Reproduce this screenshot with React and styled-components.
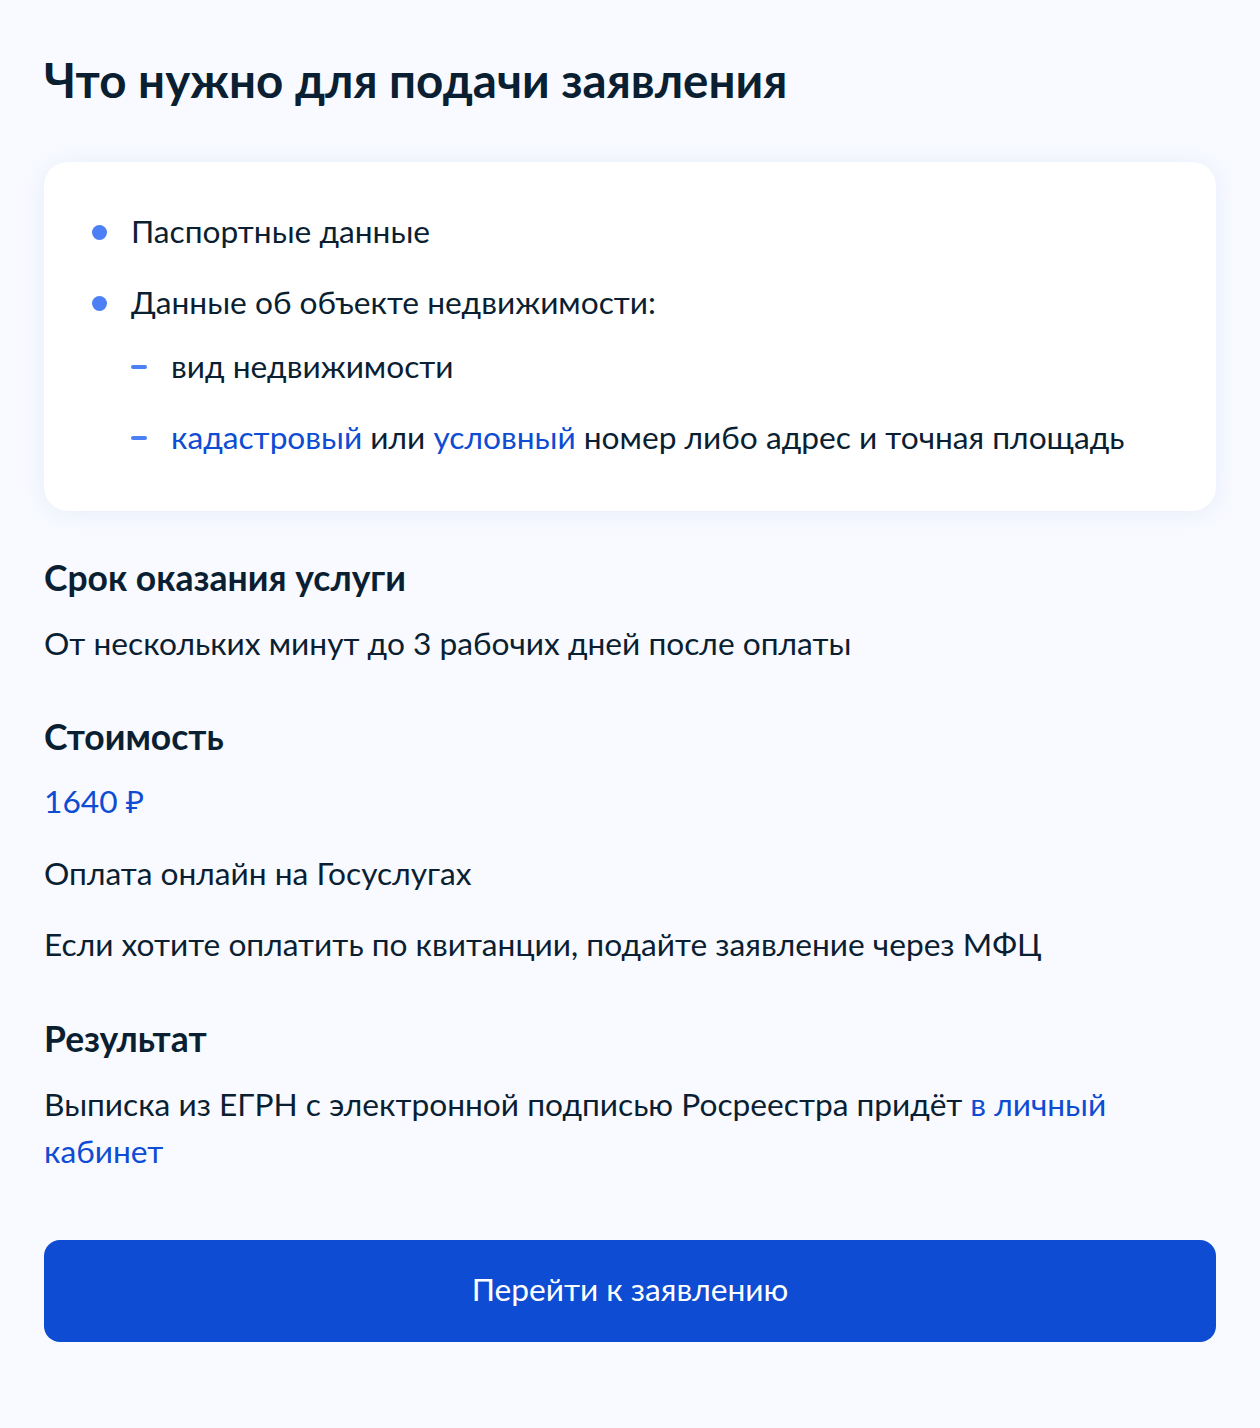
import React from "react";
import styled, { createGlobalStyle } from "styled-components";

const GlobalStyle = createGlobalStyle`
  html, body {
    margin: 0;
    padding: 0;
    background: #f8faff;
  }
  body {
    font-family: Lato, "Noto Sans", sans-serif;
    color: #0b1f33;
  }
`;

const Page = styled.main`
  padding: 52px 44px 86px;
  min-height: 1428px;
  box-sizing: border-box;
`;

const Title = styled.h1`
  margin: 0;
  font-size: 47.5px;
  line-height: 56px;
  font-weight: 700;
  letter-spacing: 0;
`;

const Card = styled.section`
  margin-top: 54px;
  background: #ffffff;
  border-radius: 24px;
  padding: 46px 48px 51px;
  box-shadow: 0 2px 24px rgba(140, 165, 220, 0.16);
`;

const List = styled.ul`
  list-style: none;
  margin: 0;
  padding: 0;
  display: flex;
  flex-direction: column;
  gap: 25px;
`;

const SubList = styled(List)`
  margin-top: 18px;
`;

const Item = styled.li`
  display: flex;
  flex-direction: column;
`;

const Row = styled.div`
  display: flex;
  align-items: center;
  font-size: 31.7px;
  line-height: 46px;
`;

const Dot = styled.span`
  flex: none;
  width: 15px;
  height: 15px;
  border-radius: 50%;
  background: #4c80f5;
  margin: 2px 24px 0 0;
`;

const Dash = styled.span`
  flex: none;
  width: 16px;
  height: 4px;
  border-radius: 2px;
  background: #4c80f5;
  margin: 2px 24px 0 0;
`;

const Indent = styled.div`
  padding-left: 39px;
`;

const Link = styled.a`
  color: #0d4cd3;
  text-decoration: none;
`;

const Section = styled.section`
  margin-top: ${(p) => p.$top}px;
`;

const Heading = styled.h3`
  margin: 0;
  font-size: 35.5px;
  line-height: 40px;
  font-weight: 700;
`;

const Text = styled.p`
  margin: ${(p) => p.$top}px 0 0;
  font-size: 31.7px;
  line-height: 47px;
  color: ${(p) => (p.$link ? "#0d4cd3" : "#0b1f33")};
`;

const Button = styled.button`
  display: block;
  width: 100%;
  margin-top: 65px;
  height: 102px;
  padding: 0 0 4px;
  border: none;
  border-radius: 16px;
  background: #0d4cd3;
  color: #ffffff;
  font-family: Lato, "Noto Sans", sans-serif;
  font-size: 31.7px;
  cursor: pointer;
`;

export default function App() {
  return (
    <>
      <GlobalStyle />
      <Page>
        <Title>Что нужно для подачи заявления</Title>
        <Card>
          <List>
            <Item>
              <Row>
                <Dot />
                Паспортные данные
              </Row>
            </Item>
            <Item>
              <Row>
                <Dot />
                Данные об объекте недвижимости:
              </Row>
              <Indent>
                <SubList>
                  <Item>
                    <Row>
                      <Dash />
                      вид недвижимости
                    </Row>
                  </Item>
                  <Item>
                    <Row>
                      <Dash />
                      <span>
                        <Link href="#">кадастровый</Link> или{" "}
                        <Link href="#">условный</Link> номер либо адрес и
                        точная площадь
                      </span>
                    </Row>
                  </Item>
                </SubList>
              </Indent>
            </Item>
          </List>
        </Card>

        <Section $top={47}>
          <Heading>Срок оказания услуги</Heading>
          <Text $top={22}>От нескольких минут до 3 рабочих дней после оплаты</Text>
        </Section>

        <Section $top={50}>
          <Heading>Стоимость</Heading>
          <Text $top={21} $link>1640 ₽</Text>
          <Text $top={25}>Оплата онлайн на Госуслугах</Text>
          <Text $top={24}>
            Если хотите оплатить по квитанции, подайте заявление через МФЦ
          </Text>
        </Section>

        <Section $top={51}>
          <Heading>Результат</Heading>
          <Text $top={22}>
            Выписка из ЕГРН с электронной подписью Росреестра придёт{" "}
            <Link href="#">в личный</Link>
            <br />
            <Link href="#">кабинет</Link>
          </Text>
        </Section>

        <Button>Перейти к заявлению</Button>
      </Page>
    </>
  );
}
